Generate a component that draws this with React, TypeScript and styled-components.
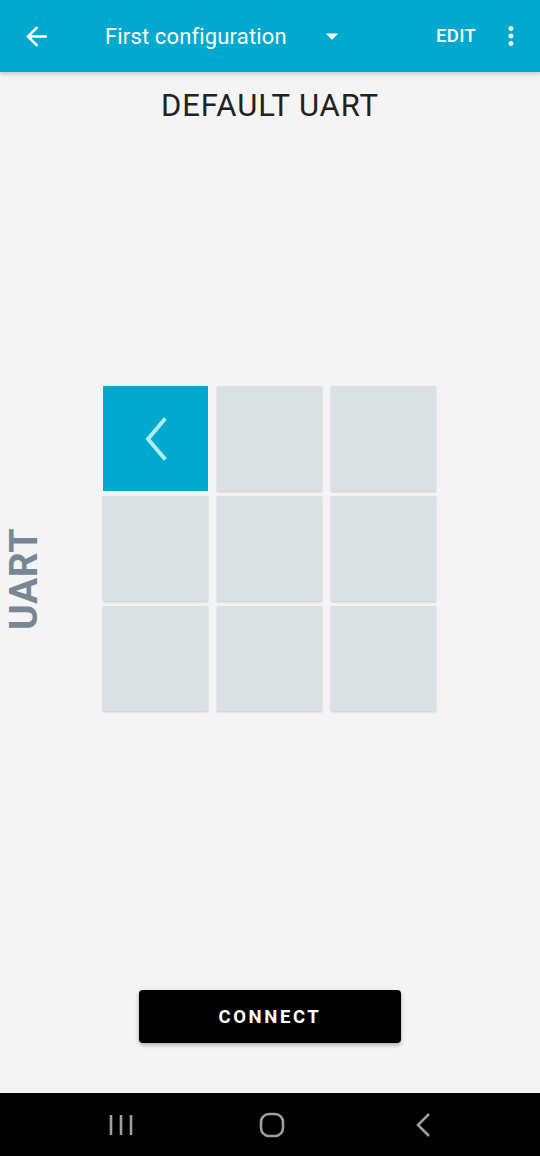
import React from "react";
import styled, { createGlobalStyle } from "styled-components";

const GlobalStyle = createGlobalStyle`
  html, body {
    margin: 0;
    padding: 0;
    background: #f4f4f4;
    font-family: Roboto, "Noto Sans", Arial, sans-serif;
  }
`;

const Screen = styled.div`
  width: 540px;
  height: 1156px;
  display: flex;
  flex-direction: column;
  background: #f4f4f4;
  overflow: hidden;
`;

const AppBar = styled.header`
  height: 72px;
  flex-shrink: 0;
  display: flex;
  align-items: center;
  background: #00a9cd;
  color: #fff;
  box-shadow: 0 2px 4px rgba(0, 0, 0, 0.18);
  position: relative;
  z-index: 1;
`;

const IconButton = styled.div<{ width: number }>`
  width: ${p => p.width}px;
  height: 72px;
  display: flex;
  align-items: center;
  justify-content: center;
  flex-shrink: 0;
`;

const Title = styled.div`
  display: flex;
  align-items: center;
  margin-left: 33px;
  font-size: 22px;
  letter-spacing: 0.15px;
`;

const Caret = styled.div`
  margin-left: 30px;
  display: flex;
  align-items: center;
`;

const EditAction = styled.div`
  margin-left: auto;
  font-size: 18.5px;
  font-weight: 500;
  letter-spacing: 0.3px;
  margin-right: 6px;
`;

const Body = styled.main`
  flex: 1;
  display: flex;
  flex-direction: column;
  align-items: center;
`;

const Heading = styled.h1`
  margin: 17px 0 0;
  font-size: 31px;
  font-weight: 400;
  line-height: 34px;
  letter-spacing: 0.9px;
  color: #222;
`;

const PadRow = styled.div`
  width: 100%;
  margin-top: 263px;
  display: grid;
  grid-template-columns: 1fr auto 1fr;
`;

const SideLabel = styled.div`
  justify-self: start;
  align-self: start;
  margin: 142px 0 0 5px;
  writing-mode: vertical-rl;
  transform: rotate(180deg);
  font-size: 39px;
  font-weight: 700;
  line-height: 38px;
  color: #778894;
  letter-spacing: 0.6px;
`;

const Pad = styled.div`
  display: grid;
  grid-template-columns: repeat(3, 105px);
  grid-auto-rows: 105px;
  column-gap: 9px;
  row-gap: 5px;
  margin-right: 1px;
`;

const Tile = styled.div<{ active?: boolean }>`
  background: ${p => (p.active ? "#00a9cd" : "#dbe1e3")};
  box-shadow: ${p => (p.active ? "none" : "0 1px 2px rgba(0, 0, 0, 0.18)")};
  display: flex;
  align-items: center;
  justify-content: center;
`;

const Spacer = styled.div`
  flex: 1;
`;

const ConnectButton = styled.button`
  width: 262px;
  height: 53px;
  margin-bottom: 50px;
  border: none;
  border-radius: 4px;
  background: #000;
  color: #fff;
  font-family: Roboto, Arial, sans-serif;
  font-size: 18.5px;
  font-weight: 700;
  letter-spacing: 2.6px;
  padding-left: 6px;
  box-shadow: 0 2px 4px rgba(0, 0, 0, 0.3);
`;

const NavBar = styled.nav`
  height: 63px;
  flex-shrink: 0;
  background: #000;
  display: flex;
  align-items: center;
  justify-content: center;
  gap: 91px;
  padding-left: 4px;
`;

const NavSlot = styled.div`
  width: 60px;
  display: flex;
  justify-content: center;
`;

export default function App() {
  const tiles = Array.from({ length: 9 }, (_, i) => i);

  return (
    <>
      <GlobalStyle />
      <Screen>
        <AppBar>
          <IconButton width={72}>
            <svg width="31" height="31" viewBox="0 0 24 24" fill="#fff">
              <path d="M20 11H7.83l5.59-5.59L12 4l-8 8 8 8 1.41-1.41L7.83 13H20v-2z" />
            </svg>
          </IconButton>
          <Title>
            First configuration
            <Caret>
              <svg width="30" height="30" viewBox="0 0 24 24" fill="#fff">
                <path d="M7 10l5 5 5-5z" />
              </svg>
            </Caret>
          </Title>
          <EditAction>EDIT</EditAction>
          <IconButton width={58}>
            <svg width="30" height="30" viewBox="0 0 24 24" fill="#fff">
              <path d="M12 8c1.1 0 2-.9 2-2s-.9-2-2-2-2 .9-2 2 .9 2 2 2zm0 2c-1.1 0-2 .9-2 2s.9 2 2 2 2-.9 2-2-.9-2-2-2zm0 6c-1.1 0-2 .9-2 2s.9 2 2 2 2-.9 2-2-.9-2-2-2z" />
            </svg>
          </IconButton>
        </AppBar>

        <Body>
          <Heading>DEFAULT UART</Heading>

          <PadRow>
            <SideLabel>UART</SideLabel>
            <Pad>
              {tiles.map(i => (
                <Tile key={i} active={i === 0}>
                  {i === 0 && (
                    <svg width="26" height="44" viewBox="0 0 26 44">
                      <polyline
                        points="21,3 5,22 21,41"
                        fill="none"
                        stroke="#b3ebf6"
                        strokeWidth="4"
                        strokeLinecap="square"
                      />
                    </svg>
                  )}
                </Tile>
              ))}
            </Pad>
          </PadRow>

          <Spacer />
          <ConnectButton>CONNECT</ConnectButton>
        </Body>

        <NavBar>
          <NavSlot>
            <svg width="24" height="24" viewBox="0 0 24 24" stroke="#9e9e9e" strokeWidth="2.6">
              <line x1="2" y1="2" x2="2" y2="22" />
              <line x1="12" y1="2" x2="12" y2="22" />
              <line x1="22" y1="2" x2="22" y2="22" />
            </svg>
          </NavSlot>
          <NavSlot>
            <svg width="26" height="26" viewBox="0 0 26 26">
              <rect x="2" y="2" width="22" height="22" rx="8" fill="none" stroke="#9e9e9e" strokeWidth="2.6" />
            </svg>
          </NavSlot>
          <NavSlot>
            <svg width="18" height="26" viewBox="0 0 18 26">
              <polyline points="15,2 4,13 15,24" fill="none" stroke="#9e9e9e" strokeWidth="2.6" />
            </svg>
          </NavSlot>
        </NavBar>
      </Screen>
    </>
  );
}
